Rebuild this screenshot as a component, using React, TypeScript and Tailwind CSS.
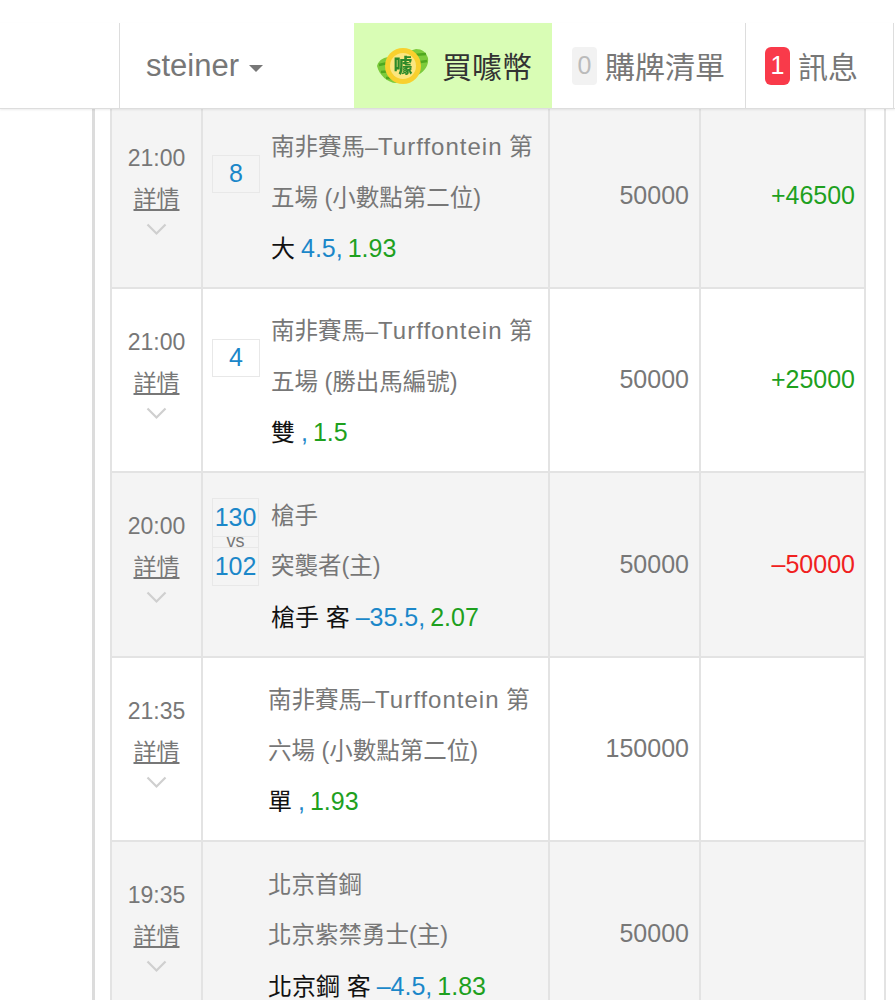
const latin = "font-['Liberation_Sans','Noto_Sans_CJK_TC',sans-serif]";

interface Bet {
  time: string;
  no?: string;
  vs?: [string, string];
  lines: [string, string];
  pick: string;
  hcp?: string;
  odds: string;
  stake: string;
  result?: string;
  height: string;
}

const bets: Bet[] = [
  { time: "21:00", no: "8", lines: ["南非賽馬–Turffontein 第", "五場 (小數點第二位)"], pick: "大", hcp: "4.5,", odds: "1.93", stake: "50000", result: "+46500", height: "-mt-[4px] h-[184px]" },
  { time: "21:00", no: "4", lines: ["南非賽馬–Turffontein 第", "五場 (勝出馬編號)"], pick: "雙", hcp: ",", odds: "1.5", stake: "50000", result: "+25000", height: "h-[184px]" },
  { time: "20:00", vs: ["130", "102"], lines: ["槍手", "突襲者(主)"], pick: "槍手 客", hcp: "–35.5,", odds: "2.07", stake: "50000", result: "–50000", height: "h-[185px]" },
  { time: "21:35", lines: ["南非賽馬–Turffontein 第", "六場 (小數點第二位)"], pick: "單", hcp: ",", odds: "1.93", stake: "150000", height: "h-[184px]" },
  { time: "19:35", lines: ["北京首鋼", "北京紫禁勇士(主)"], pick: "北京鋼 客", hcp: "–4.5,", odds: "1.83", stake: "50000", height: "h-[185px]" },
];

function Logo() {
  return (
    <svg width="54" height="42" viewBox="0 0 54 42" className="shrink-0 blur-[0.5px]">
      <path d="M1 21 C3 14 9 12 14 12 L40 4 C46 4 50 7 52 13 C53 20 49 26 42 30 L20 38 C12 38 3 30 1 21Z" fill="#7ccb3c" />
      <path d="M3 20 L16 17 M5 27 L16 26 M10 33 L20 33 M38 10 L50 9 M38 18 L51 16" stroke="#4fa81f" strokeWidth="2.5" />
      <circle cx="27" cy="21" r="18" fill="#f8d02e" />
      <circle cx="27" cy="21" r="13" fill="#fbe680" />
      <text x="27" y="28" textAnchor="middle" fontSize="19" fontWeight="900" fill="#2d8a2a" fontFamily="'Noto Sans CJK TC', sans-serif">噱</text>
    </svg>
  );
}

function Chevron() {
  return (
    <svg width="21" height="13" viewBox="0 0 21 13" fill="none" stroke="#cfcfcf" strokeWidth="2.2" className="mt-[3px]">
      <path d="M1.5 1.5 L10.5 10.5 L19.5 1.5" />
    </svg>
  );
}

// The race name sets its latin part wider than the CJK around it
function MatchLine({ text }: { text: string }) {
  const parts = text.split("Turffontein");
  if (parts.length === 1) return <>{text}</>;
  return (
    <>
      {parts[0]}
      <span className="text-[24px] tracking-[1px]">Turffontein</span>
      {parts[1]}
    </>
  );
}

function BetRow({ bet, shaded }: { bet: Bet; shaded: boolean }) {
  return (
    <div className={`grid grid-cols-[91px_347px_151px_167px] border-b-2 border-[#e3e3e3] ${bet.height} ${shaded ? "bg-[#f4f4f4]" : "bg-white"}`}>
      <div className="flex flex-col items-center border-l-2 border-[#e3e3e3] pt-[33px] text-[#777]">
        <div className="text-[23px] leading-[41px]">{bet.time}</div>
        <div className="text-[23px] leading-[41px] underline underline-offset-2">詳情</div>
        <Chevron />
      </div>
      <div className="flex border-l-2 border-[#e3e3e3]">
        <div className="flex w-[68px] shrink-0 items-start pl-[9px]">
          {bet.no && (
            <div className="mt-[50px] flex h-[38px] w-[48px] items-center justify-center border border-[#e8e8e8] text-[25px] text-[#1b87c9]">{bet.no}</div>
          )}
          {bet.vs && (
            <div className="mt-[25px] flex w-[47px] flex-col items-center border border-[#e8e8e8] text-[#1b87c9]">
              <div className="text-[25px] leading-[37px]">{bet.vs[0]}</div>
              <div className="h-[12px] w-full border-y border-[#e8e8e8] text-center text-[18px] leading-[9px] text-[#777]">vs</div>
              <div className="text-[25px] leading-[37px]">{bet.vs[1]}</div>
            </div>
          )}
        </div>
        <div className={`flex flex-col justify-center whitespace-nowrap pt-[5px] ${bet.no || bet.vs ? "" : "-ml-[3px]"}`}>
          <div className="text-[23.5px] leading-[50.5px] text-[#777]"><MatchLine text={bet.lines[0]} /></div>
          <div className="text-[23.5px] leading-[50.5px] text-[#777]">{bet.lines[1]}</div>
          <div className="text-[24px] leading-[50.5px] text-[#111]">
            {bet.pick}
            <span className="ml-[6px] text-[25px] text-[#1b87c9]">{bet.hcp}</span>
            <span className="ml-[5px] text-[25px] text-[#1ea01e]">{bet.odds}</span>
          </div>
        </div>
      </div>
      <div className="flex items-center justify-end border-l-2 border-[#e3e3e3] pr-[10px] text-[25px] text-[#777]">{bet.stake}</div>
      <div className={`flex items-center justify-end border-x-2 border-[#e3e3e3] pr-[9px] text-[25px] ${bet.result?.startsWith("+") ? "text-[#1ea01e]" : "text-[#f02020]"}`}>{bet.result}</div>
    </div>
  );
}

export default function App() {
  return (
    <div className={`h-[1000px] w-[895px] overflow-hidden bg-white ${latin}`}>
      {/* Top nav */}
      <div className="relative z-10 bg-white pt-[23px]">
        <div className="flex h-[86px] border-b border-[#ddd] pl-[119px] shadow-[0_1px_2px_rgba(0,0,0,0.08)]">
          <div className="flex w-[235px] items-center border-l border-[#ddd] pl-[26px] pt-[2px] text-[31px] text-[#777]">
            steiner
            <span className="ml-[10px] mt-[3px] h-0 w-0 border-x-[7px] border-t-[7px] border-x-transparent border-t-[#777]" />
          </div>
          <div className="flex w-[198px] items-center gap-[12px] bg-[#d9fdb5] pl-[22px] text-[30px] text-[#333]">
            <Logo />
            <span className="pt-[3px]">買噱幣</span>
          </div>
          <div className="flex w-[193px] items-center gap-[8px] pl-[20px] text-[30px] text-[#777]">
            <span className="flex h-[38px] w-[25px] items-center justify-center rounded bg-[#f2f2f2] text-[25px] text-[#bbb]">0</span>
            <span className="pt-[3px]">購牌清單</span>
          </div>
          <div className="flex w-[149px] items-center gap-[8px] border-x border-[#ddd] pl-[19px] text-[30px] text-[#777]">
            <span className="flex h-[38px] w-[25px] items-center justify-center rounded-md bg-[#f93a4a] text-[25px] text-white">1</span>
            <span className="pt-[3px]">訊息</span>
          </div>
        </div>
      </div>

      {/* Bet table */}
      <div className="flex">
        <div className="ml-[92px] w-[18px] border-l-[3px] border-[#dcdcdc]" />
        <div className="w-[756px]">
          {bets.map((bet, i) => (
            <BetRow key={i} bet={bet} shaded={i % 2 === 0} />
          ))}
        </div>
        <div className="ml-[18px] w-[2px] bg-[#e3e3e3]" />
      </div>
    </div>
  );
}
